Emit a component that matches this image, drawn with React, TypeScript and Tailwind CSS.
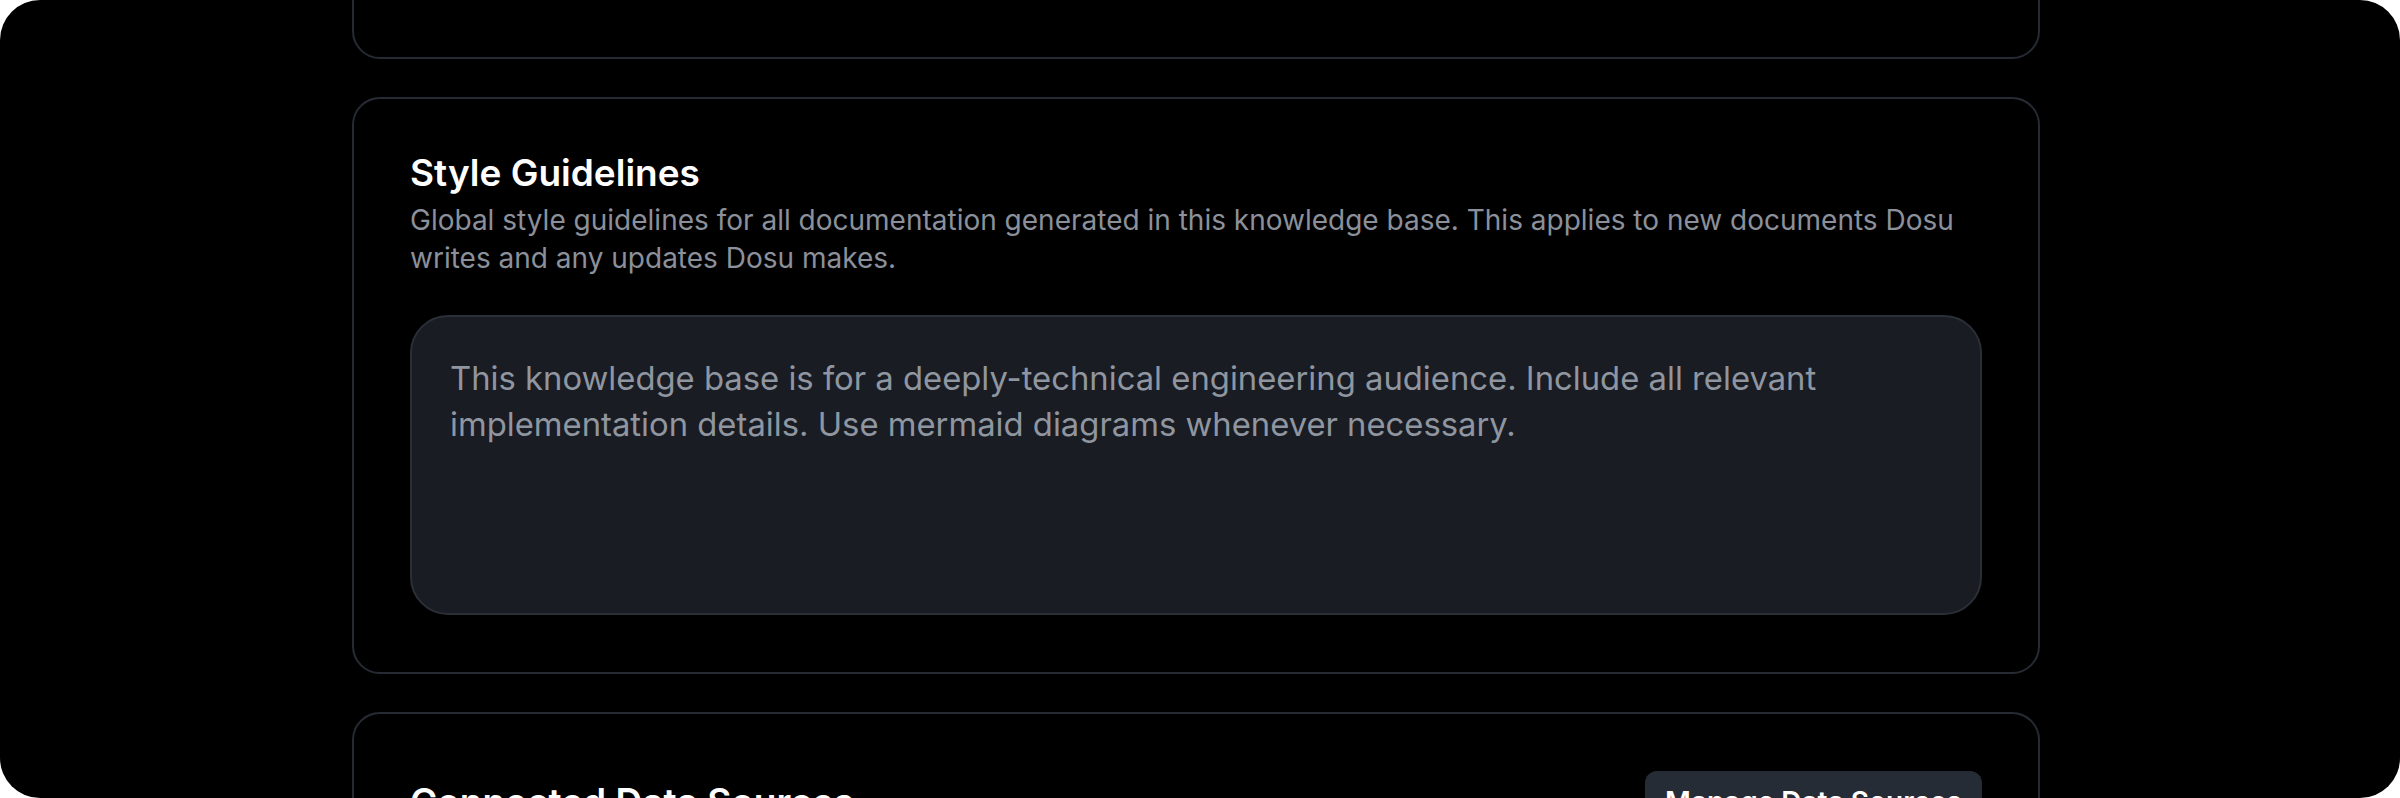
import React from 'react';

const font = "font-['Inter','Noto_Sans','Liberation_Sans',sans-serif]";

const StyleGuidelinesCard = () => (
  <section className="rounded-[28px] border-2 border-[#262b33] px-[56px] pt-[51px] pb-[57px]">
    <h2 className="text-[37px] leading-[46px] font-semibold text-white">Style Guidelines</h2>
    <p className="mt-[5px] text-[28px] leading-[38.4px] text-[#8b909a]">
      Global style guidelines for all documentation generated in this knowledge base. This applies to new documents Dosu
      writes and any updates Dosu makes.
    </p>
    <textarea
      defaultValue="This knowledge base is for a deeply-technical engineering audience. Include all relevant implementation details. Use mermaid diagrams whenever necessary."
      className={`mt-[37px] block h-[300px] w-full resize-none rounded-[38px] border-2 border-[#2a2f37] bg-[#191c23] p-[38px] text-[32.8px] leading-[46px] text-[#9096a0] outline-none ${font}`}
    />
  </section>
);

const DataSourcesCard = () => (
  <section className="rounded-[28px] border-2 border-[#262b33] px-[56px] pt-[57px] pb-[57px]">
    <div className="flex items-center justify-between">
      <h2 className="text-[37px] leading-[46px] font-semibold text-white">Connected Data Sources</h2>
      <button className="flex h-[62px] w-[337px] items-center justify-center rounded-[12px] bg-[#262c35] text-[28px] font-semibold text-white">
        Manage Data Sources
      </button>
    </div>
    <div className="mt-[40px] h-[200px]" />
  </section>
);

export default function App() {
  return (
    <div className="min-h-screen bg-white">
      <div className={`h-[798px] overflow-hidden rounded-[40px] bg-black ${font}`}>
        {/* scrolled list of settings cards */}
        <div className="-mt-[241px] flex flex-col gap-[38px] pl-[352px] pr-[360px]">
          <section className="h-[300px] rounded-[28px] border-2 border-[#262b33]" />
          <StyleGuidelinesCard />
          <DataSourcesCard />
        </div>
      </div>
    </div>
  );
}
